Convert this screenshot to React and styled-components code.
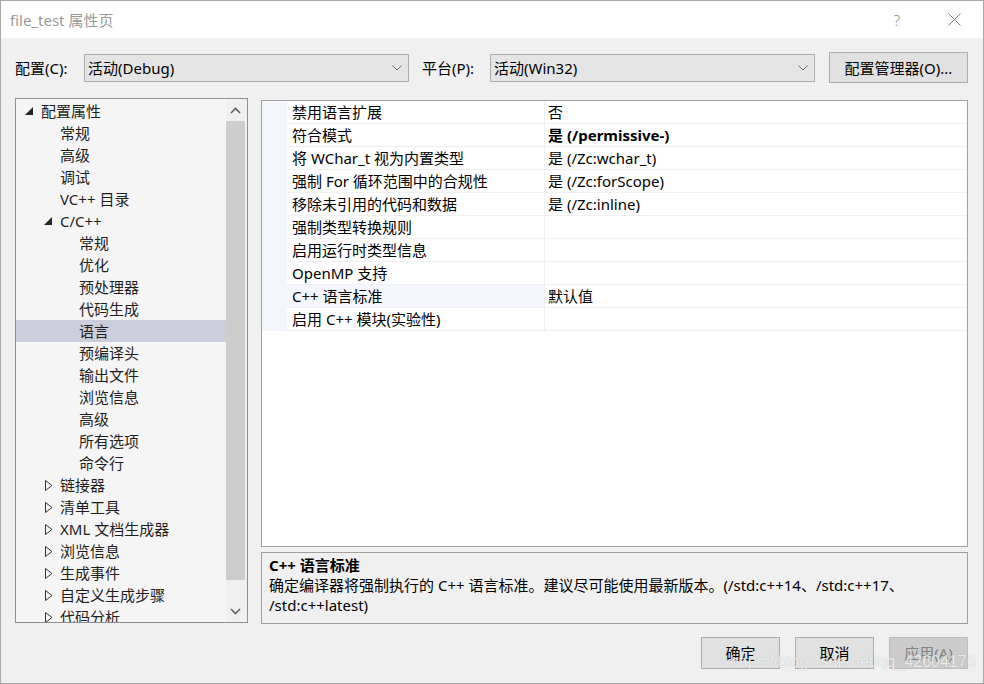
import React from 'react'
import styled, { createGlobalStyle, css } from 'styled-components'

const GlobalStyle = createGlobalStyle`
  html, body {
    margin: 0;
    padding: 0;
    background: #f0f0f0;
  }
  body {
    font-family: "Noto Sans", "Noto Sans CJK SC", sans-serif;
    font-size: 15px;
    color: #000;
  }
  * {
    box-sizing: border-box;
  }
`

const Window = styled.div`
  position: relative;
  width: 984px;
  height: 684px;
  border: 1px solid #a8a8a8;
  background: #f0f0f0;
  display: flex;
  flex-direction: column;
  overflow: hidden;
`

const TitleBar = styled.div`
  height: 37px;
  flex: none;
  background: #fff;
  display: flex;
  align-items: center;
  padding: 0 6px 0 9px;
  color: #999;
  line-height: 20px;
`

const TitleButtons = styled.div`
  margin-left: auto;
  display: flex;
  gap: 11px;
`

const TitleButton = styled.div`
  width: 46px;
  height: 30px;
  display: flex;
  align-items: center;
  justify-content: center;
  color: #8a8a8a;
  font-family: "Noto Sans", sans-serif;
  font-weight: 300;
  font-size: 15px;
`

const Content = styled.div`
  flex: 1;
  padding: 14px 15px 0 14px;
  display: flex;
  flex-direction: column;
`

const ConfigRow = styled.div`
  height: 31px;
  display: flex;
  align-items: center;
`

const Label = styled.div`
  width: ${(props) => props.width}px;
  margin-left: ${(props) => props.offset || 0}px;
  line-height: 20px;
  white-space: nowrap;
`

const Combo = styled.div`
  width: 325px;
  height: 28px;
  display: flex;
  align-items: center;
  padding: 0 6px 0 3px;
  background: #e5e5e5;
  border: 1px solid #acacac;
  line-height: 20px;
`

const ComboText = styled.div`
  flex: 1;
  white-space: nowrap;
`

const Button = styled.div`
  width: ${(props) => props.width || 79}px;
  height: ${(props) => props.height || 32}px;
  margin-left: ${(props) => props.offset || 0}px;
  display: flex;
  align-items: center;
  justify-content: center;
  background: #e1e1e1;
  border: 1px solid #adadad;
  line-height: 20px;
  white-space: nowrap;
  ${(props) =>
    props.disabled &&
    css`
      background: #cccccc;
      border-color: #bfbfbf;
      color: #838383;
    `}
`

const Main = styled.div`
  margin-top: 15px;
  height: 526px;
  display: flex;
  gap: 13px;
  align-items: flex-start;
`

const Tree = styled.div`
  width: 233px;
  height: 525px;
  border: 1px solid #8e8f94;
  background: #f5f5f5;
  display: flex;
`

const TreeList = styled.div`
  flex: 1;
  padding-top: 1px;
  overflow: hidden;
`

const TreeRow = styled.div`
  height: 22px;
  display: flex;
  align-items: center;
  padding-left: ${(props) => 8 + props.level * 19}px;
  background: ${(props) => (props.selected ? '#cccedb' : 'transparent')};
  color: #1e1e1e;
  line-height: 20px;
  white-space: nowrap;
`

const Expander = styled.div`
  width: 17px;
  height: 22px;
  flex: none;
  display: flex;
  align-items: center;
  padding-left: ${(props) => (props.expanded ? 1 : 2)}px;
`

const ScrollBar = styled.div`
  width: 21px;
  background: #f0f0f0;
  display: flex;
  flex-direction: column;
`

const ScrollArrow = styled.div`
  height: 22px;
  display: flex;
  align-items: center;
  justify-content: center;
  padding-right: 2px;
`

const ScrollThumb = styled.div`
  height: 459px;
  margin-right: 2px;
  background: #cdcdcd;
`

const ScrollTrack = styled.div`
  flex: 1;
`

const RightColumn = styled.div`
  flex: 1;
  height: 526px;
  padding-top: 2px;
  display: flex;
  flex-direction: column;
  gap: 5px;
`

const Grid = styled.div`
  height: 447px;
  background: #fff;
  border: 1px solid #a0a0a0;
`

const GridRow = styled.div`
  display: grid;
  grid-template-columns: 25px 258px 1fr;
  height: 23px;
`

const Margin = styled.div`
  background: #f3f6fb;
`

const NameCell = styled.div`
  padding-left: 5px;
  border-right: 1px solid #f0f0f0;
  border-bottom: 1px solid #f0f0f0;
  background: ${(props) => (props.selected ? '#f3f6fb' : '#fff')};
  line-height: 22px;
  white-space: nowrap;
`

const ValueCell = styled.div`
  padding-left: 3px;
  border-bottom: 1px solid #f0f0f0;
  line-height: 22px;
  white-space: nowrap;
  font-weight: ${(props) => (props.bold ? 700 : 400)};
`

const Description = styled.div`
  height: 72px;
  border: 1px solid #a0a0a0;
  padding: 2px 7px;
  line-height: 20px;
  white-space: nowrap;
`

const DescTitle = styled.div`
  font-weight: 700;
`

const ButtonRow = styled.div`
  margin-top: 13px;
  display: flex;
  justify-content: flex-end;
  gap: 15px;
`

const Watermark = styled.div`
  position: absolute;
  left: 729px;
  top: 652px;
  font-family: "Liberation Sans", Arial, sans-serif;
  font-size: 16px;
  color: rgba(255, 255, 255, 0.75);
  text-shadow: 0 0 1px rgba(120, 120, 120, 0.45);
  pointer-events: none;
`

const treeItems = [
  { level: 0, label: '配置属性', state: 'open' },
  { level: 1, label: '常规' },
  { level: 1, label: '高级' },
  { level: 1, label: '调试' },
  { level: 1, label: 'VC++ 目录' },
  { level: 1, label: 'C/C++', state: 'open' },
  { level: 2, label: '常规' },
  { level: 2, label: '优化' },
  { level: 2, label: '预处理器' },
  { level: 2, label: '代码生成' },
  { level: 2, label: '语言', selected: true },
  { level: 2, label: '预编译头' },
  { level: 2, label: '输出文件' },
  { level: 2, label: '浏览信息' },
  { level: 2, label: '高级' },
  { level: 2, label: '所有选项' },
  { level: 2, label: '命令行' },
  { level: 1, label: '链接器', state: 'closed' },
  { level: 1, label: '清单工具', state: 'closed' },
  { level: 1, label: 'XML 文档生成器', state: 'closed' },
  { level: 1, label: '浏览信息', state: 'closed' },
  { level: 1, label: '生成事件', state: 'closed' },
  { level: 1, label: '自定义生成步骤', state: 'closed' },
  { level: 1, label: '代码分析', state: 'closed' },
]

const properties = [
  { name: '禁用语言扩展', value: '否' },
  { name: '符合模式', value: '是 (/permissive-)', bold: true },
  { name: '将 WChar_t 视为内置类型', value: '是 (/Zc:wchar_t)' },
  { name: '强制 For 循环范围中的合规性', value: '是 (/Zc:forScope)' },
  { name: '移除未引用的代码和数据', value: '是 (/Zc:inline)' },
  { name: '强制类型转换规则', value: '' },
  { name: '启用运行时类型信息', value: '' },
  { name: 'OpenMP 支持', value: '' },
  { name: 'C++ 语言标准', value: '默认值', selected: true },
  { name: '启用 C++ 模块(实验性)', value: '' },
]

const ComboChevron = () => (
  <svg width="10" height="6" viewBox="0 0 10 6">
    <path d="M0.5 0.5 L5 5 L9.5 0.5" fill="none" stroke="#6a6a6a" strokeWidth="1" />
  </svg>
)

const ScrollChevron = ({ down }) => (
  <svg width="11" height="7" viewBox="0 0 11 7">
    <path
      d={down ? 'M1 1 L5.5 5.5 L10 1' : 'M1 6 L5.5 1.5 L10 6'}
      fill="none"
      stroke="#606060"
      strokeWidth="1.6"
    />
  </svg>
)

const TreeArrow = ({ state }) => {
  if (state === 'open') {
    return (
      <svg width="8" height="8" viewBox="0 0 8 8">
        <polygon points="8,0 8,8 0,8" fill="#262626" />
      </svg>
    )
  }
  return (
    <svg width="8" height="11" viewBox="0 0 8 11">
      <polygon points="0.5,0.5 7,5.5 0.5,10.5" fill="none" stroke="#333" strokeWidth="1" />
    </svg>
  )
}

const CloseIcon = () => (
  <svg width="13" height="13" viewBox="0 0 13 13">
    <path d="M0.5 0.5 L12.5 12.5 M12.5 0.5 L0.5 12.5" stroke="#7a7a7a" strokeWidth="1" />
  </svg>
)

export default function App() {
  return (
    <>
      <GlobalStyle />
      <Window>
        <TitleBar>
          file_test 属性页
          <TitleButtons>
            <TitleButton>?</TitleButton>
            <TitleButton>
              <CloseIcon />
            </TitleButton>
          </TitleButtons>
        </TitleBar>
        <Content>
          <ConfigRow>
            <Label width={69}>配置(C):</Label>
            <Combo>
              <ComboText>活动(Debug)</ComboText>
              <ComboChevron />
            </Combo>
            <Label width={68} offset={13}>
              平台(P):
            </Label>
            <Combo>
              <ComboText>活动(Win32)</ComboText>
              <ComboChevron />
            </Combo>
            <Button width={139} height={31} offset={14}>
              配置管理器(O)...
            </Button>
          </ConfigRow>
          <Main>
            <Tree>
              <TreeList>
                {treeItems.map((item, index) => (
                  <TreeRow key={index} level={item.level} selected={item.selected}>
                    <Expander expanded={item.state === 'open'}>
                      {item.state && <TreeArrow state={item.state} />}
                    </Expander>
                    {item.label}
                  </TreeRow>
                ))}
              </TreeList>
              <ScrollBar>
                <ScrollArrow>
                  <ScrollChevron />
                </ScrollArrow>
                <ScrollThumb />
                <ScrollTrack />
                <ScrollArrow>
                  <ScrollChevron down />
                </ScrollArrow>
              </ScrollBar>
            </Tree>
            <RightColumn>
              <Grid>
                {properties.map((prop, index) => (
                  <GridRow key={index}>
                    <Margin />
                    <NameCell selected={prop.selected}>{prop.name}</NameCell>
                    <ValueCell bold={prop.bold}>{prop.value}</ValueCell>
                  </GridRow>
                ))}
              </Grid>
              <Description>
                <DescTitle>C++ 语言标准</DescTitle>
                <div>
                  确定编译器将强制执行的 C++ 语言标准。建议尽可能使用最新版本。(/std:c++14、/std:c++17、
                </div>
                <div>/std:c++latest)</div>
              </Description>
            </RightColumn>
          </Main>
          <ButtonRow>
            <Button>确定</Button>
            <Button>取消</Button>
            <Button disabled>应用(A)</Button>
          </ButtonRow>
        </Content>
        <Watermark>https://blog.csdn.net/qq_42604176</Watermark>
      </Window>
    </>
  )
}
